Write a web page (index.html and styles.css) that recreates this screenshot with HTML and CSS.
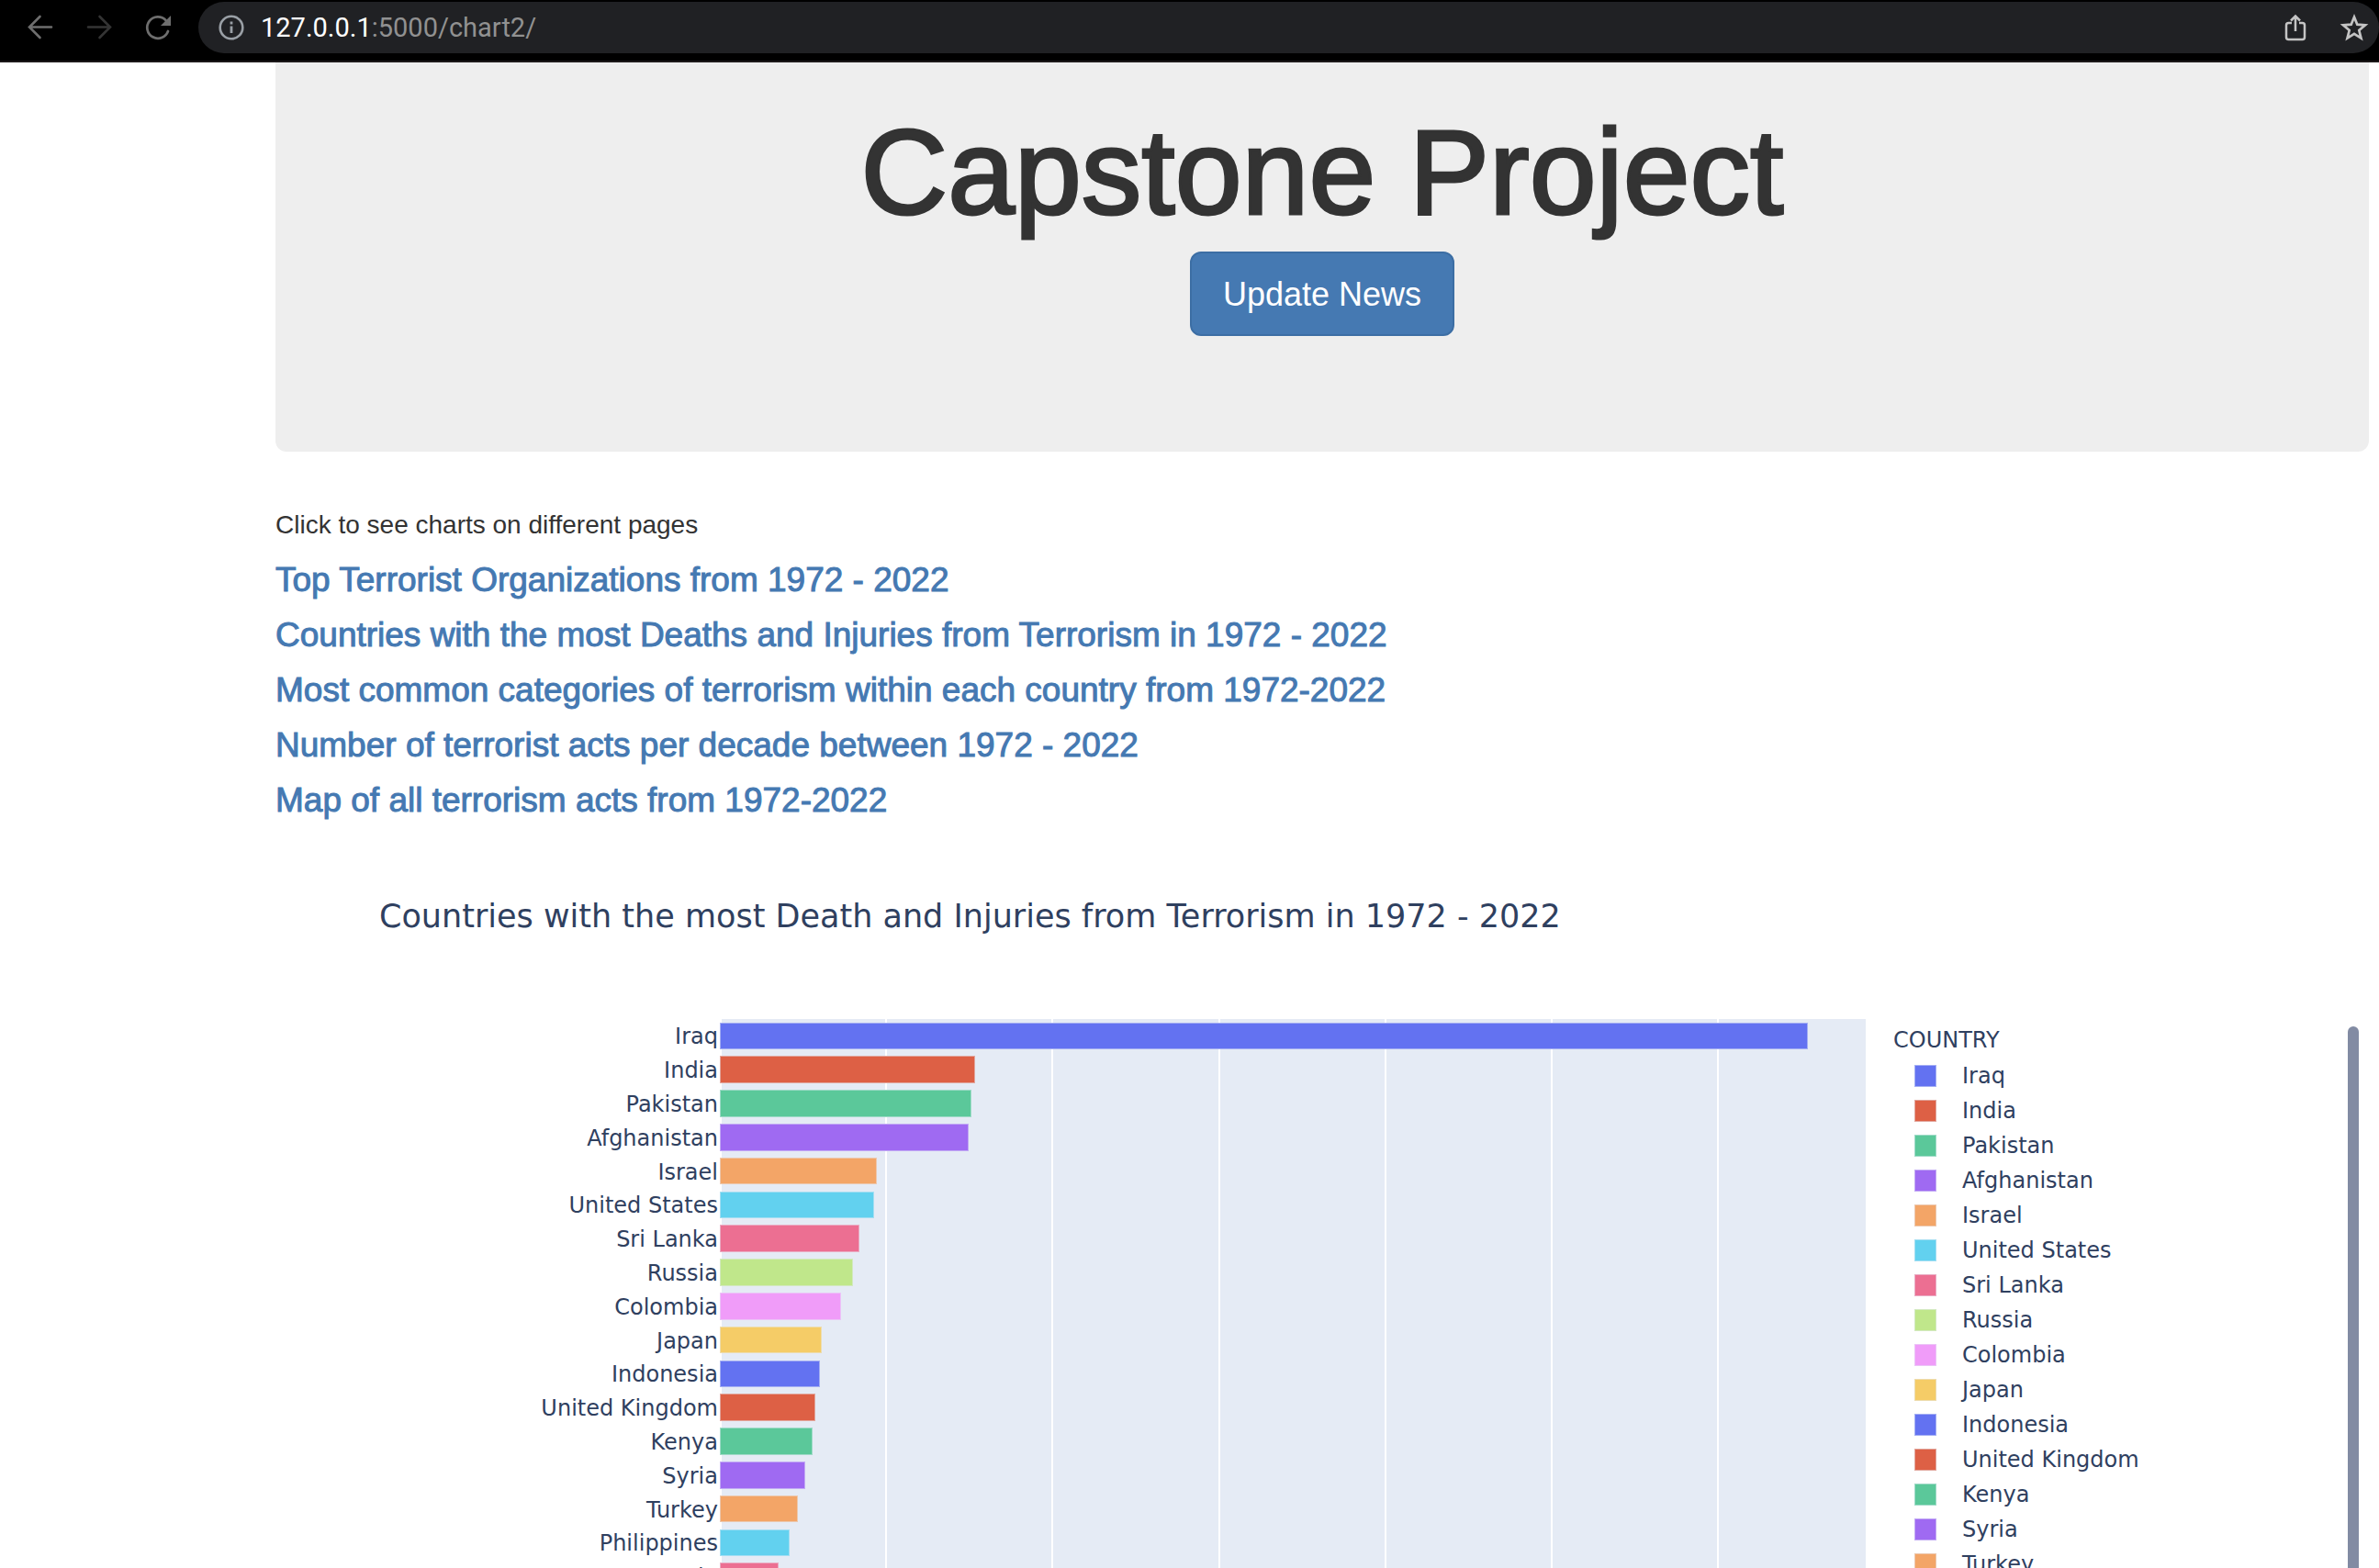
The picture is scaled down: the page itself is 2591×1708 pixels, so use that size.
FILE: index.html
```html
<!DOCTYPE html>
<html lang="en">
<head>
<meta charset="utf-8">
<title>Capstone Project</title>
<link rel="stylesheet" href="styles.css">
</head>
<body>
<header class="browser-bar">
  <div class="nav-group">
    <button class="nav-button" type="button" aria-label="Back">
      <svg class="icon" viewBox="0 0 32 32"><path d="M28 15.500H5M15.500 4 4 15.500 15.500 27" fill="none" stroke="#6e6e6e" stroke-width="2.600" stroke-linecap="round"/></svg>
    </button>
    <button class="nav-button" type="button" aria-label="Forward" disabled>
      <svg class="icon" viewBox="0 0 32 32"><path d="M4 15.500h23M16.500 4 28 15.500 16.500 27" fill="none" stroke="#343434" stroke-width="2.600" stroke-linecap="round"/></svg>
    </button>
    <button class="nav-button" type="button" aria-label="Reload">
      <svg class="icon" viewBox="0 0 32 32"><path d="M27 20A11.700 11.700 0 1 1 24.500 8" fill="none" stroke="#6e6e6e" stroke-width="2.700" stroke-linecap="round"/><path d="M30 3v11H19z" fill="#6e6e6e"/></svg>
    </button>
  </div>
  <div class="address">
    <svg class="icon" viewBox="0 0 32 32"><circle cx="16" cy="16" r="12.300" fill="none" stroke="#9aa0a6" stroke-width="2.600"/><path d="M14.600 14.500h2.800V22h-2.800zM14.600 9.500h2.800v3h-2.800z" fill="#9aa0a6"/></svg>
    <div class="url"><span class="url-host">127.0.0.1</span>:5000/chart2/</div>
    <button class="nav-button" type="button" aria-label="Share">
      <svg class="icon" viewBox="0 0 32 32"><path d="M12 11H8.500Q6 11 6 13.500v13Q6 29 8.500 29h15q2.500 0 2.500-2.500v-13Q26 11 23.500 11H20M16 20V4M11 8.500l5-5 5 5" fill="none" stroke="#c4c4c4" stroke-width="2.500"/></svg>
    </button>
    <button class="nav-button" type="button" aria-label="Bookmark">
      <svg class="icon" viewBox="0 0 32 32"><path d="M16 4.500l3.300 8.200 8.700.6-6.700 5.700 2.200 8.600L16 22.900l-7.500 4.700 2.200-8.600L4 13.300l8.700-.6z" fill="none" stroke="#c4c4c4" stroke-width="2.700"/></svg>
    </button>
  </div>
</header>
<main class="page">
  <section class="jumbotron">
    <h1 class="headline">Capstone Project</h1>
    <button class="update" type="button">Update News</button>
  </section>
  <nav class="charts-nav">
    <p class="hint">Click to see charts on different pages</p>
    <a class="chart-link" href="#organizations">Top Terrorist Organizations from 1972 - 2022</a>
    <a class="chart-link" href="#countries">Countries with the most Deaths and Injuries from Terrorism in 1972 - 2022</a>
    <a class="chart-link" href="#categories">Most common categories of terrorism within each country from 1972-2022</a>
    <a class="chart-link" href="#decades">Number of terrorist acts per decade between 1972 - 2022</a>
    <a class="chart-link" href="#map">Map of all terrorism acts from 1972-2022</a>
  </nav>
  <section class="figure">
    <h2 class="figure-title">Countries with the most Death and Injuries from Terrorism in 1972 - 2022</h2>
    <div class="chart">
      <ol class="rows labels">
        <li>Iraq</li><li>India</li><li>Pakistan</li><li>Afghanistan</li><li>Israel</li><li>United States</li><li>Sri Lanka</li><li>Russia</li><li>Colombia</li><li>Japan</li><li>Indonesia</li><li>United Kingdom</li><li>Kenya</li><li>Syria</li><li>Turkey</li><li>Philippines</li><li>Spain</li>
      </ol>
      <div class="rows plot">
        <div class="gridlines"><i></i><i></i><i></i><i></i><i></i><i></i></div>
        <div class="bar blue" style="width:94.95%"></div>
        <div class="bar red" style="width:22.28%"></div>
        <div class="bar green" style="width:21.96%"></div>
        <div class="bar purple" style="width:21.75%"></div>
        <div class="bar orange" style="width:13.7%"></div>
        <div class="bar cyan" style="width:13.46%"></div>
        <div class="bar pink" style="width:12.18%"></div>
        <div class="bar lime" style="width:11.6%"></div>
        <div class="bar magenta" style="width:10.56%"></div>
        <div class="bar yellow" style="width:8.88%"></div>
        <div class="bar blue" style="width:8.74%"></div>
        <div class="bar red" style="width:8.33%"></div>
        <div class="bar green" style="width:8.08%"></div>
        <div class="bar purple" style="width:7.45%"></div>
        <div class="bar orange" style="width:6.81%"></div>
        <div class="bar cyan" style="width:6.08%"></div>
        <div class="bar pink" style="width:5.12%"></div>
      </div>
      <aside class="legend">
        <div class="legend-body">
          <h3 class="legend-title">COUNTRY</h3>
          <ul class="legend-list">
            <li><span class="swatch blue"></span>Iraq</li>
            <li><span class="swatch red"></span>India</li>
            <li><span class="swatch green"></span>Pakistan</li>
            <li><span class="swatch purple"></span>Afghanistan</li>
            <li><span class="swatch orange"></span>Israel</li>
            <li><span class="swatch cyan"></span>United States</li>
            <li><span class="swatch pink"></span>Sri Lanka</li>
            <li><span class="swatch lime"></span>Russia</li>
            <li><span class="swatch magenta"></span>Colombia</li>
            <li><span class="swatch yellow"></span>Japan</li>
            <li><span class="swatch blue"></span>Indonesia</li>
            <li><span class="swatch red"></span>United Kingdom</li>
            <li><span class="swatch green"></span>Kenya</li>
            <li><span class="swatch purple"></span>Syria</li>
            <li><span class="swatch orange"></span>Turkey</li>
          </ul>
        </div>
        <div class="scroll-thumb"></div>
      </aside>
    </div>
  </section>
</main>
</body>
</html>
```
FILE: styles.css
```css
* {
  box-sizing: border-box;
}

body {
  margin: 0;
  height: 100vh;
  overflow: hidden;
  background: #fff;
  color: #333;
  font-family: "Liberation Sans", Arial, sans-serif;
  font-size: 28px;
}

h1, h2, h3, p, ol, ul {
  margin: 0;
  padding: 0;
  font-weight: 400;
  list-style: none;
}

/* Browser toolbar */
.browser-bar {
  display: flex;
  align-items: center;
  gap: 28px;
  height: 68px;
  padding: 0 0 6px 28px;
  background: #000;
  border-bottom: 2px solid #1c1819;
}

.nav-group {
  display: flex;
  gap: 32px;
}

.nav-button {
  display: flex;
  padding: 0;
  border: 0;
  background: none;
}

.icon {
  display: block;
  width: 32px;
  height: 32px;
}

.address {
  display: flex;
  flex: 1;
  align-items: center;
  height: 56px;
  padding: 0 11px 0 20px;
  border-radius: 28px;
  background: #202124;
}

.url {
  flex: 1;
  padding-left: 16px;
  color: #919191;
  font-family: Roboto, sans-serif;
  font-size: 29px;
  line-height: 32px;
}

.url-host {
  color: #fff;
}

.address .nav-button {
  margin-left: 32px;
}

/* Page */
.page {
  margin: 0 11px 0 300px;
}

.jumbotron {
  display: flex;
  flex-direction: column;
  align-items: center;
  height: 424px;
  padding-top: 50px;
  border-radius: 0 0 12px 12px;
  background: #eee;
}

.headline {
  margin-bottom: 16px;
  font-size: 131px;
  line-height: 140px;
  -webkit-text-stroke: 3px #333;
}

.update {
  height: 92px;
  padding: 2px 34px 0;
  border: 2px solid #3c6ea4;
  border-radius: 12px;
  background: #4579b2;
  color: #fff;
  font: 36px "Liberation Sans", Arial, sans-serif;
}

.charts-nav {
  display: flex;
  flex-direction: column;
  align-items: flex-start;
  gap: 20px;
  padding-top: 60px;
}

.hint {
  line-height: 40px;
}

.chart-link {
  color: #4579b2;
  font-size: 37px;
  line-height: 40px;
  text-decoration: none;
  -webkit-text-stroke: 1px #4579b2;
}

/* Chart */
.figure {
  padding-top: 86px;
  color: #2f405f;
  font-family: Verdana, "DejaVu Sans", sans-serif;
}

.figure-title {
  padding-left: 113px;
  font-size: 35px;
  line-height: 40px;
}

.chart {
  display: grid;
  grid-template-columns: 484px 1fr 548px;
  margin-top: 92px;
  font-size: 24px;
}

.rows {
  display: grid;
  grid-template-rows: repeat(20, 1fr);
  height: 736px;
  align-items: center;
}

.labels {
  padding-right: 2px;
  text-align: right;
  line-height: 30px;
}

.labels li {
  padding-top: 2px;
}

.plot {
  position: relative;
  background: linear-gradient(#fff, #fff) 0 0 / 2px 100% no-repeat #e5ebf5;
}

.gridlines {
  position: absolute;
  inset: 0 0 0 1px;
  display: grid;
  grid-template-columns: repeat(6, 14.53%);
}

.gridlines i {
  border-right: 2px solid #fff;
}

.bar {
  position: relative;
  height: 80%;
  border: 1px solid rgba(229, 236, 246, 0.5);
}

.legend {
  display: flex;
  justify-content: space-between;
  padding: 8px 11px 0 30px;
}

.legend-title {
  font-size: 24px;
  line-height: 30px;
}

.legend-list {
  padding: 5px 0 0 23px;
}

.legend-list li {
  display: flex;
  align-items: center;
  gap: 28px;
  height: 38px;
}

.swatch {
  width: 24px;
  height: 24px;
  border: 1px solid rgba(229, 236, 246, 0.5);
}

.scroll-thumb {
  width: 12px;
  border-radius: 6px;
  background: #828ba3;
}

.blue { background-color: #6372f1; }
.red { background-color: #dd6045; }
.green { background-color: #5bc89a; }
.purple { background-color: #9f6af2; }
.orange { background-color: #f3a567; }
.cyan { background-color: #62d1ef; }
.pink { background-color: #ec6f92; }
.lime { background-color: #c0e78b; }
.magenta { background-color: #f09cf9; }
.yellow { background-color: #f5cc67; }
```
